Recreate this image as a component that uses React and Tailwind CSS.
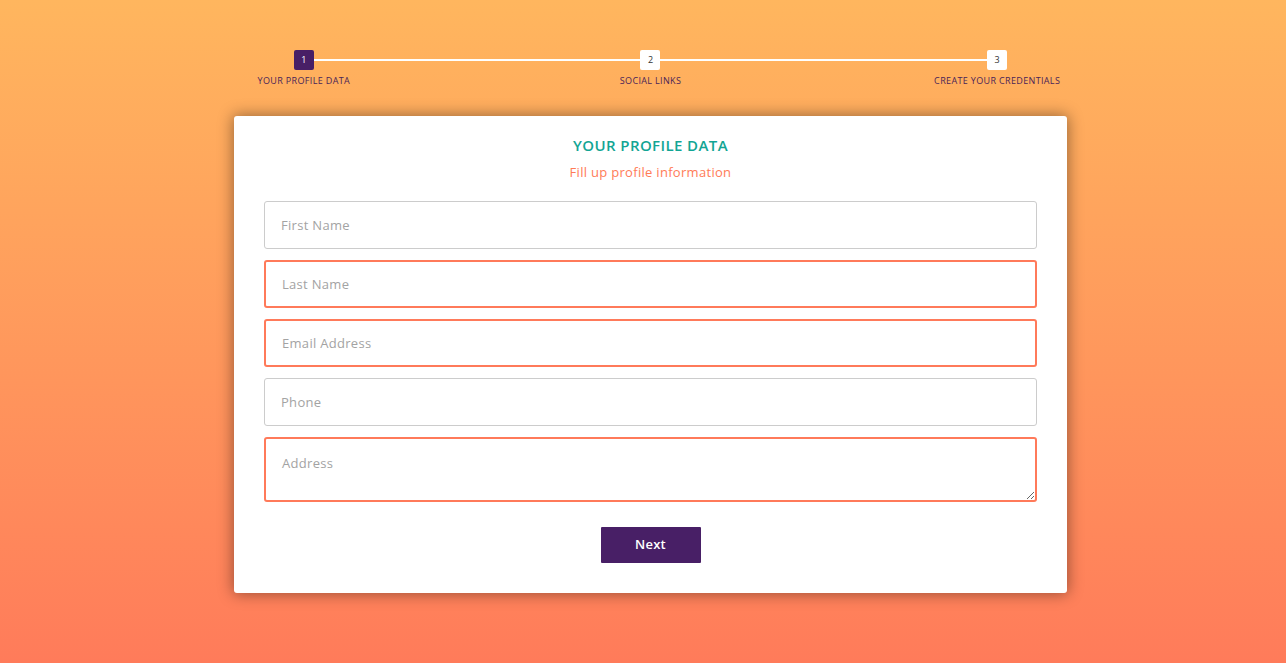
const steps = [
  { n: 1, label: "Your Profile Data", active: true },
  { n: 2, label: "Social Links" },
  { n: 3, label: "Create Your Credentials" },
];

const fields = [
  { name: "First Name", error: false },
  { name: "Last Name", error: true },
  { name: "Email Address", error: true },
  { name: "Phone", error: false },
];

export default function App() {
  return (
    <div
      className="min-h-screen bg-gradient-to-b from-[#ffb65e] to-[#ff7b5a] pt-[50px] pb-[60px] pl-[15px]"
      style={{ fontFamily: '"Open Sans", "Liberation Sans", sans-serif' }}
    >
      <Stepper />
      <div className="w-[833px] mx-auto mt-[29px] bg-white rounded-[3px] shadow-[0_0_15px_1px_rgba(0,0,0,0.4)] px-[30px] pt-[20px] pb-[30px]">
        <h2 className="text-center text-[15px] font-semibold text-[#12a594] leading-[18px] tracking-[0.4px]">YOUR PROFILE DATA</h2>
        <h3 className="text-center text-[13px] text-[#ff7b57] mt-[10px] leading-[16px] tracking-[0.3px]">Fill up profile information</h3>
        <form className="mt-[21px] flex flex-col gap-[11px]">
          {fields.map((f) => (
            <input
              key={f.name}
              placeholder={f.name}
              className={
                "w-full h-[48px] rounded-[3px] px-[16px] text-[13px] tracking-[0.3px] text-[#555] placeholder:text-[#a3a3a3] outline-none bg-white " +
                (f.error ? "border-2 border-[#ff7a5a]" : "border border-[#cccccc]")
              }
            />
          ))}
          <textarea
            placeholder="Address"
            className="w-full h-[65px] rounded-[3px] px-[16px] pt-[15px] text-[13px] tracking-[0.3px] text-[#555] placeholder:text-[#a3a3a3] outline-none bg-white border-2 border-[#ff7a5a]"
          />
          <button
            type="button"
            className="mx-auto mt-[14px] w-[100px] h-[36px] rounded-[1px] bg-[#481f66] text-white text-[13px] font-semibold tracking-[0.2px]"
          >
            Next
          </button>
        </form>
      </div>
    </div>
  );
}

function Stepper() {
  return (
    <div className="relative w-[1040px] mx-auto">
      {/* connecting line behind the numbers */}
      <div className="absolute left-[173px] right-[173px] top-[9px] h-[2px] bg-white" />
      <ul className="relative grid grid-cols-3">
        {steps.map((s) => (
          <li key={s.n} className="flex flex-col items-center">
            <span
              className={
                "w-[20px] h-[20px] rounded-[2px] flex items-center justify-center text-[9px] " +
                (s.active ? "bg-[#481f66] text-white" : "bg-white text-[#333]")
              }
            >
              {s.n}
            </span>
            <span className="mt-[5px] text-[9px] uppercase tracking-[0.35px] text-[#4a2458] leading-[12px]">{s.label}</span>
          </li>
        ))}
      </ul>
    </div>
  );
}
